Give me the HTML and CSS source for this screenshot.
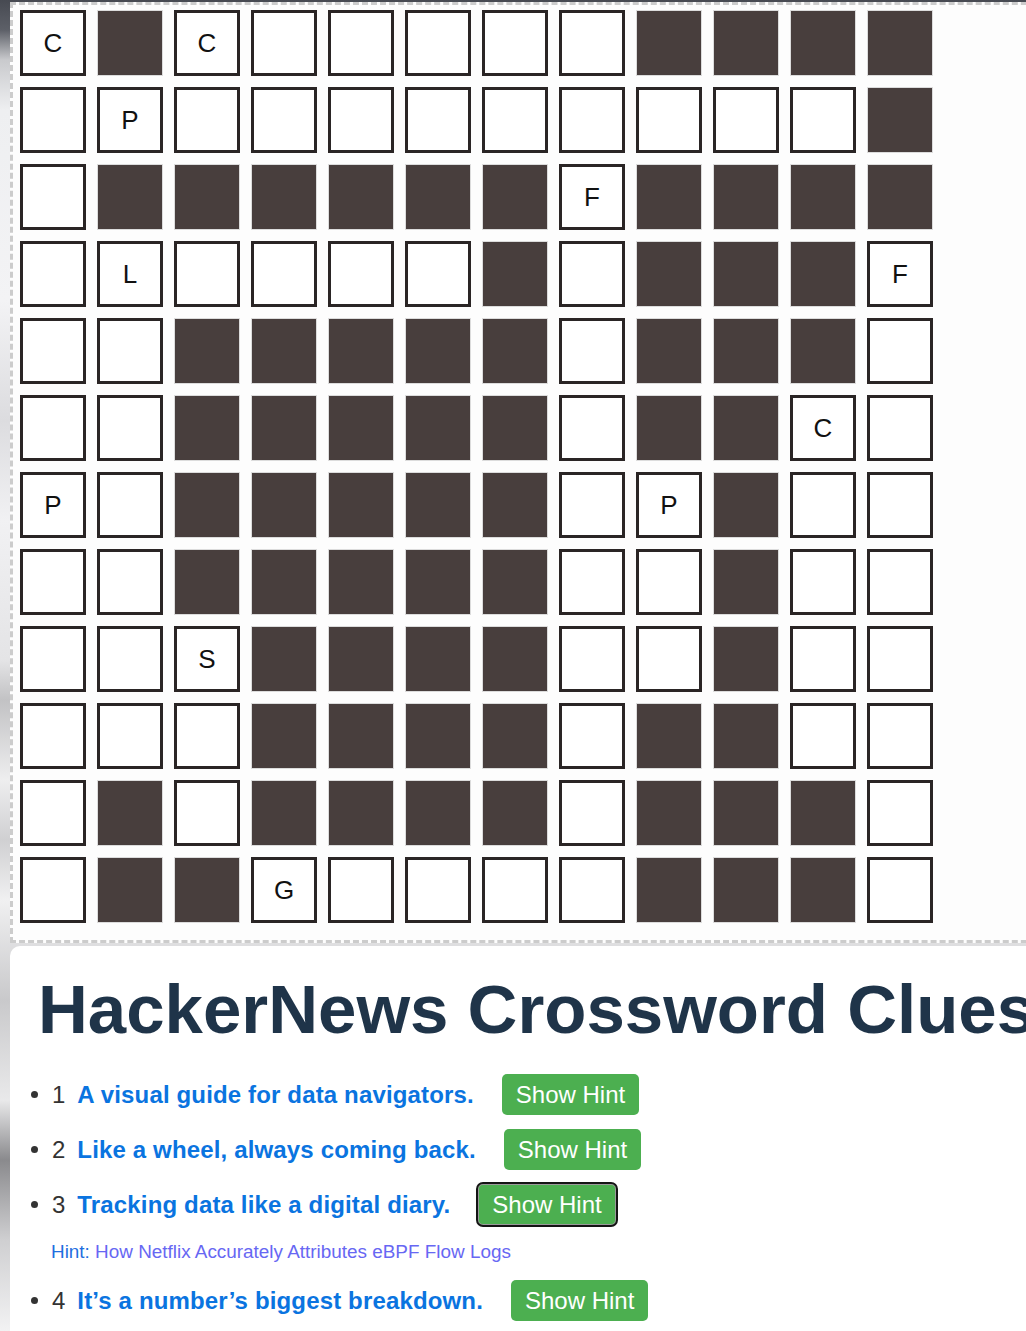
FILE: index.html
```html
<!DOCTYPE html>
<html lang="en">
<head>
<meta charset="utf-8">
<title>HackerNews Crossword</title>
<link rel="stylesheet" href="styles.css">
</head>
<body>
<div class="board">
  <div class="grid">
    <div class="cell">C</div><div class="cell blk"></div><div class="cell">C</div><div class="cell"></div><div class="cell"></div><div class="cell"></div><div class="cell"></div><div class="cell"></div><div class="cell blk"></div><div class="cell blk"></div><div class="cell blk"></div><div class="cell blk"></div>
    <div class="cell"></div><div class="cell">P</div><div class="cell"></div><div class="cell"></div><div class="cell"></div><div class="cell"></div><div class="cell"></div><div class="cell"></div><div class="cell"></div><div class="cell"></div><div class="cell"></div><div class="cell blk"></div>
    <div class="cell"></div><div class="cell blk"></div><div class="cell blk"></div><div class="cell blk"></div><div class="cell blk"></div><div class="cell blk"></div><div class="cell blk"></div><div class="cell">F</div><div class="cell blk"></div><div class="cell blk"></div><div class="cell blk"></div><div class="cell blk"></div>
    <div class="cell"></div><div class="cell">L</div><div class="cell"></div><div class="cell"></div><div class="cell"></div><div class="cell"></div><div class="cell blk"></div><div class="cell"></div><div class="cell blk"></div><div class="cell blk"></div><div class="cell blk"></div><div class="cell">F</div>
    <div class="cell"></div><div class="cell"></div><div class="cell blk"></div><div class="cell blk"></div><div class="cell blk"></div><div class="cell blk"></div><div class="cell blk"></div><div class="cell"></div><div class="cell blk"></div><div class="cell blk"></div><div class="cell blk"></div><div class="cell"></div>
    <div class="cell"></div><div class="cell"></div><div class="cell blk"></div><div class="cell blk"></div><div class="cell blk"></div><div class="cell blk"></div><div class="cell blk"></div><div class="cell"></div><div class="cell blk"></div><div class="cell blk"></div><div class="cell">C</div><div class="cell"></div>
    <div class="cell">P</div><div class="cell"></div><div class="cell blk"></div><div class="cell blk"></div><div class="cell blk"></div><div class="cell blk"></div><div class="cell blk"></div><div class="cell"></div><div class="cell">P</div><div class="cell blk"></div><div class="cell"></div><div class="cell"></div>
    <div class="cell"></div><div class="cell"></div><div class="cell blk"></div><div class="cell blk"></div><div class="cell blk"></div><div class="cell blk"></div><div class="cell blk"></div><div class="cell"></div><div class="cell"></div><div class="cell blk"></div><div class="cell"></div><div class="cell"></div>
    <div class="cell"></div><div class="cell"></div><div class="cell">S</div><div class="cell blk"></div><div class="cell blk"></div><div class="cell blk"></div><div class="cell blk"></div><div class="cell"></div><div class="cell"></div><div class="cell blk"></div><div class="cell"></div><div class="cell"></div>
    <div class="cell"></div><div class="cell"></div><div class="cell"></div><div class="cell blk"></div><div class="cell blk"></div><div class="cell blk"></div><div class="cell blk"></div><div class="cell"></div><div class="cell blk"></div><div class="cell blk"></div><div class="cell"></div><div class="cell"></div>
    <div class="cell"></div><div class="cell blk"></div><div class="cell"></div><div class="cell blk"></div><div class="cell blk"></div><div class="cell blk"></div><div class="cell blk"></div><div class="cell"></div><div class="cell blk"></div><div class="cell blk"></div><div class="cell blk"></div><div class="cell"></div>
    <div class="cell"></div><div class="cell blk"></div><div class="cell blk"></div><div class="cell">G</div><div class="cell"></div><div class="cell"></div><div class="cell"></div><div class="cell"></div><div class="cell blk"></div><div class="cell blk"></div><div class="cell blk"></div><div class="cell"></div>
  </div>
</div>
<div class="card">
  <h1 class="title">HackerNews Crossword Clues</h1>
  <ul class="clues">
    <li class="clue"><div class="row"><span class="num">1</span><a class="text">A visual guide for data navigators.</a><button class="hint-btn">Show Hint</button></div></li>
    <li class="clue"><div class="row"><span class="num">2</span><a class="text">Like a wheel, always coming back.</a><button class="hint-btn">Show Hint</button></div></li>
    <li class="clue"><div class="row"><span class="num">3</span><a class="text">Tracking data like a digital diary.</a><button class="hint-btn focused">Show Hint</button></div>
      <div class="hint"><span class="hint-label">Hint:</span> <span class="hint-text">How Netflix Accurately Attributes eBPF Flow Logs</span></div>
    </li>
    <li class="clue"><div class="row"><span class="num">4</span><a class="text">It’s a number’s biggest breakdown.</a><button class="hint-btn">Show Hint</button></div></li>
  </ul>
</div>
</body>
</html>
```
FILE: styles.css
```css
html, body {
  overflow: hidden;
}
body {
  margin: 2px 0 0 10px;
  font-family: "Liberation Sans", Arial, sans-serif;
  background: linear-gradient(180deg, #474a52 0px, #5d6068 30px, #c9cacd 60px, #eeeff1 110px, #f3f3f5 300px, #dcdcdf 420px, #f1f1f3 520px, #e4e4e6 660px, #c2c2c4 700px, #eeeeef 780px, #d0d0d2 840px, #f0f0f1 900px, #c9c9cb 1000px, #e9e9ea 1100px, #8a8a8d 1160px, #cfcfd1 1240px, #f2f2f3 1331px);
}
.board {
  width: 1060px;
  border: 3px dashed #cccccc;
  background: #fdfdfd;
  padding: 5px 7px 17px;
}
.grid {
  display: grid;
  grid-template-columns: repeat(12, 66px);
  grid-auto-rows: 66px;
  gap: 11px;
}
.cell {
  box-sizing: border-box;
  border: 3px solid #2a2525;
  background: #ffffff;
  display: flex;
  align-items: center;
  justify-content: center;
  font-size: 26px;
  color: #111111;
}
.cell.blk {
  background: #483e3d;
  border: 1px solid #dcdcdc;
}
.card {
  margin-top: 3px;
  width: 1100px;
  background: #ffffff;
  border-radius: 10px 0 0 0;
  padding: 25px 25px 40px 21px;
}
.title {
  margin: 0 0 0 7px;
  font-size: 69px;
  line-height: 77px;
  font-weight: bold;
  color: #1f3449;
  white-space: nowrap;
}
.clues {
  list-style: none;
  margin: 26px 0 0;
  padding: 0;
}
.clue {
  margin-bottom: 14px;
}
.row {
  display: flex;
  align-items: center;
  height: 41px;
  font-size: 24px;
}
.row::before {
  content: "";
  width: 7px;
  height: 7px;
  border-radius: 50%;
  background: #333333;
  margin-right: 14px;
  flex: none;
}
.num {
  margin-right: 12px;
  color: #333333;
}
.text {
  font-weight: bold;
  color: #0a74e0;
  letter-spacing: 0.15px;
  white-space: nowrap;
}
.hint-btn {
  margin-left: 28px;
  height: 41px;
  box-sizing: border-box;
  font-family: "Liberation Sans", Arial, sans-serif;
  font-size: 24px;
  line-height: 27px;
  color: #ffffff;
  background: #4caf50;
  border: none;
  border-radius: 5px;
  padding: 7px 14px;
  white-space: nowrap;
}
.hint-btn.focused {
  outline: 2px solid #141414;
  outline-offset: 0;
  box-shadow: inset 0 0 0 1px #9a9a9a;
}
.hint {
  font-size: 18.9px;
  line-height: 22px;
  margin: 16px 0 0 20px;
  padding-bottom: 3px;
}
.hint-label {
  color: #1f6fe0;
}
.hint-text {
  color: #6767f3;
}
```
